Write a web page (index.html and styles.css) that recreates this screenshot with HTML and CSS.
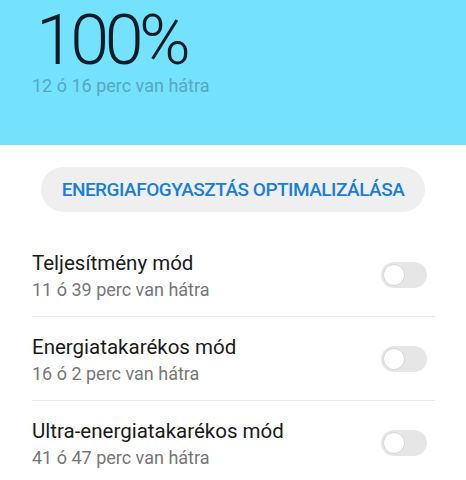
FILE: index.html
```html
<!DOCTYPE html>
<html lang="hu">
<head>
    <meta charset="UTF-8">
    <meta name="viewport" content="width=device-width, initial-scale=1.0">
    <title>Akkumulátor</title>
    <link rel="stylesheet" href="styles.css">
</head>
<body>
    <div class="battery-header">
        <div class="battery-level">100%</div>
        <div class="battery-left">12 ó 16 perc van hátra</div>
    </div>

    <div class="optimize-wrap">
        <button class="optimize-btn">ENERGIAFOGYASZTÁS OPTIMALIZÁLÁSA</button>
    </div>

    <ul class="mode-list">
        <li class="mode-row">
            <div class="mode-text">
                <div class="mode-title">Teljesítmény mód</div>
                <div class="mode-sub">11 ó 39 perc van hátra</div>
            </div>
            <span class="switch"></span>
        </li>
        <li class="mode-row">
            <div class="mode-text">
                <div class="mode-title">Energiatakarékos mód</div>
                <div class="mode-sub">16 ó 2 perc van hátra</div>
            </div>
            <span class="switch"></span>
        </li>
        <li class="mode-row">
            <div class="mode-text">
                <div class="mode-title">Ultra-energiatakarékos mód</div>
                <div class="mode-sub">41 ó 47 perc van hátra</div>
            </div>
            <span class="switch"></span>
        </li>
    </ul>
</body>
</html>
```

FILE: styles.css
```css
body {
    font-family: Roboto, "Noto Sans", sans-serif;
    margin: 0;
    background: #fff;
}
.battery-header {
    background-color: #74e1fd;
    height: 145px;
    padding: 0 32px;
    box-sizing: border-box;
}
.battery-level {
    font-size: 70px;
    font-weight: 300;
    color: #0b1d26;
    line-height: 70px;
    padding-top: 5px;
    padding-left: 4px;
    letter-spacing: -4.5px;
}
.battery-left {
    font-size: 18px;
    color: #55a9c3;
    line-height: 22px;
    margin-top: 0;
}
.optimize-wrap {
    padding: 22px 41px 0 41px;
}
.optimize-btn {
    width: 100%;
    height: 45px;
    border: none;
    border-radius: 23px;
    background-color: #efefef;
    color: #1a7ed8;
    font-family: Roboto, "Noto Sans", sans-serif;
    font-size: 19px;
    font-weight: 500;
    letter-spacing: -0.5px;
    padding: 0;
}
.mode-list {
    list-style-type: none;
    margin: 21px 0 0 0;
    padding: 0 31px 0 32px;
}
.mode-row {
    display: flex;
    align-items: center;
    justify-content: space-between;
    height: 83px;
    border-bottom: 1px solid #e8e8e8;
}
.mode-row:last-child {
    border-bottom: none;
}
.mode-text {
    padding-top: 3px;
}
.mode-title {
    font-size: 20.5px;
    color: #1a1a1a;
    line-height: 26px;
}
.mode-sub {
    font-size: 18px;
    color: #777;
    line-height: 24px;
    margin-top: 2px;
}
.switch {
    width: 46px;
    height: 26px;
    border-radius: 13px;
    background-color: #e6e6e6;
    margin-right: 8px;
    display: flex;
    align-items: center;
    padding-left: 2px;
    box-sizing: border-box;
}
.switch::before {
    content: "";
    width: 20px;
    height: 20px;
    border-radius: 50%;
    background: #fff;
    border: 1px solid #d6d6d6;
}
```
